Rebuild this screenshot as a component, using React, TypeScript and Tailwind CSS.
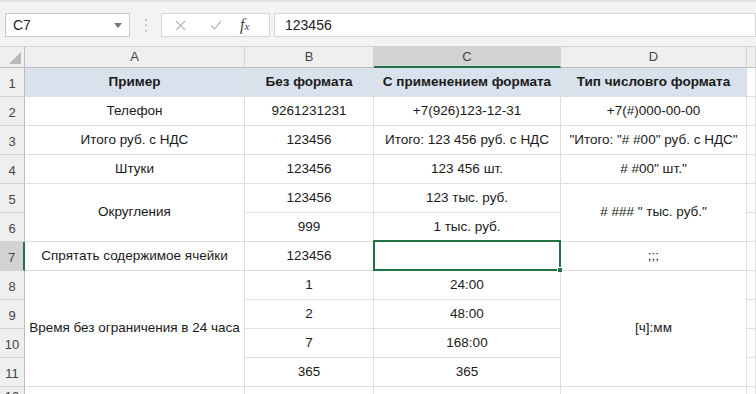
import React from "react";

type Row = {
  n: number;
  cells: { text?: string; span?: number; selected?: boolean }[];
};

const rows: Row[] = [
  { n: 2, cells: [{ text: "Телефон" }, { text: "9261231231" }, { text: "+7(926)123-12-31" }, { text: "+7(#)000-00-00" }] },
  { n: 3, cells: [{ text: "Итого руб. с НДС" }, { text: "123456" }, { text: "Итого: 123 456 руб. с НДС" }, { text: '"Итого: "# #00" руб. с НДС"' }] },
  { n: 4, cells: [{ text: "Штуки" }, { text: "123456" }, { text: "123 456 шт." }, { text: '# #00" шт."' }] },
  { n: 5, cells: [{ text: "Округления", span: 2 }, { text: "123456" }, { text: "123 тыс. руб." }, { text: '# ### " тыс. руб."', span: 2 }] },
  { n: 6, cells: [{ text: "999" }, { text: "1 тыс. руб." }] },
  { n: 7, cells: [{ text: "Спрятать содержимое ячейки" }, { text: "123456" }, { selected: true }, { text: ";;;" }] },
  { n: 8, cells: [{ text: "Время без ограничения в 24 часа", span: 4 }, { text: "1" }, { text: "24:00" }, { text: "[ч]:мм", span: 4 }] },
  { n: 9, cells: [{ text: "2" }, { text: "48:00" }] },
  { n: 10, cells: [{ text: "7" }, { text: "168:00" }] },
  { n: 11, cells: [{ text: "365" }, { text: "365" }] },
];

const cellBase =
  "flex items-center justify-center border-r border-b border-[#dedede] text-[13.5px] text-[#1a1a1a] whitespace-nowrap";

const RowNum = ({ n, active }: { n: number | string; active?: boolean }) => (
  <div
    className={
      "flex items-end justify-center pb-[3px] border-b border-[#d4d4d4] text-[13px] text-[#444] " +
      (active ? "bg-[#d3d3d3] border-r-2 border-r-[#217346]" : "bg-[#efefef] border-r border-r-[#bdbdbd]")
    }
  >
    {n}
  </div>
);

const App = () => {
  return (
    <div className="w-[756px] h-[394px] overflow-hidden bg-white font-['Liberation_Sans',Arial,sans-serif]">
      {/* formula bar */}
      <div className="h-[47px] bg-[#f3f3f3] border-t-[2px] border-[#e2e2e2] border-b border-b-[#d4d4d4]">
        <div className="flex items-center pt-[11px]">
          <div className="ml-[5px] w-[125px] h-[24px] bg-white border border-[#c8c8c8] flex items-center justify-between pl-[7px] pr-[7px] text-[14px] text-[#222]">
            <span>C7</span>
            <svg width="8" height="5" viewBox="0 0 8 5">
              <path d="M0 0h8L4 5z" fill="#777" />
            </svg>
          </div>
          <div className="w-[31px] flex justify-center">
            <svg width="3" height="13" viewBox="0 0 3 13">
              <rect x="1" y="0" width="1.5" height="1.5" fill="#aaa" />
              <rect x="1" y="5.5" width="1.5" height="1.5" fill="#aaa" />
              <rect x="1" y="11" width="1.5" height="1.5" fill="#aaa" />
            </svg>
          </div>
          <div className="w-[109px] h-[24px] bg-white border border-[#d6d6d6] flex items-center">
            <svg className="ml-[13px]" width="11" height="11" viewBox="0 0 11 11">
              <path d="M1 1l9 9M10 1l-9 9" stroke="#b8b8b8" strokeWidth="1.2" />
            </svg>
            <svg className="ml-[24px]" width="12" height="10" viewBox="0 0 12 10">
              <path d="M1 5.5l3.5 3.5L11 1" stroke="#b8b8b8" strokeWidth="1.2" fill="none" />
            </svg>
            <span className="ml-[18px] font-['Liberation_Serif',serif] italic text-[16px] text-[#444]">
              f<span className="text-[11px]">x</span>
            </span>
          </div>
          <div className="ml-[4px] flex-1 h-[24px] bg-white border border-[#d6d6d6] flex items-center pl-[10px] text-[14px] text-[#222]">
            123456
          </div>
        </div>
      </div>

      {/* grid */}
      <div className="grid grid-cols-[25px_220px_129px_187px_186px_1fr] grid-rows-[21px_repeat(11,29px)_1fr] h-[347px]">
        {/* column headers */}
        <div className="bg-[#efefef] border-r border-b border-[#bdbdbd] relative">
          <svg className="absolute right-[3px] bottom-[3px]" width="12" height="12" viewBox="0 0 12 12">
            <path d="M12 0v12H0z" fill="#b9b9b9" />
          </svg>
        </div>
        {["A", "B", "C", "D", ""].map((l) => (
          <div
            key={l || "E"}
            className={
              "flex items-center justify-center text-[13px] text-[#444] border-r border-r-[#d4d4d4] " +
              (l === "C" ? "bg-[#d3d3d3] border-b-2 border-b-[#217346]" : "bg-[#efefef] border-b border-b-[#bdbdbd]")
            }
          >
            {l}
          </div>
        ))}

        {/* row 1 */}
        <RowNum n={1} />
        {["Пример", "Без формата", "С применением формата", "Тип числовго формата"].map((t) => (
          <div key={t} className={cellBase + " bg-[#d9e1ec] font-bold"}>
            {t}
          </div>
        ))}
        <div className={cellBase}></div>

        {rows.map((r) => (
          <React.Fragment key={r.n}>
            <RowNum n={r.n} active={r.n === 7} />
            {r.cells.map((c, i) => (
              <div
                key={i}
                className={
                  cellBase +
                  (c.span === 2 ? " row-span-2" : c.span === 4 ? " row-span-4" : "") +
                  (c.selected ? " relative" : " overflow-hidden")
                }
              >
                {c.text}
                {c.selected && (
                  <div className="absolute -left-[1px] -top-[2px] right-[-1px] bottom-[-1px] border-2 border-[#217346]">
                    <div className="absolute -right-[4px] -bottom-[4px] w-[6px] h-[6px] bg-[#217346] border border-white" />
                  </div>
                )}
              </div>
            ))}
            <div className={cellBase}></div>
          </React.Fragment>
        ))}

        {/* row 12 */}
        <RowNum n={12} />
        <div className={cellBase}></div>
        <div className={cellBase}></div>
        <div className={cellBase}></div>
        <div className={cellBase}></div>
        <div className={cellBase}></div>
      </div>
    </div>
  );
};

export default App;
